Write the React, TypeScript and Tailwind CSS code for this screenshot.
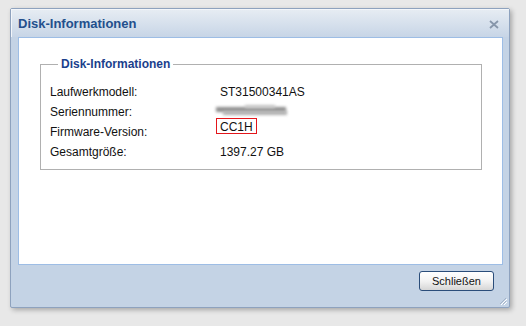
import React from "react";

const rows: { label: string; value: React.ReactNode }[] = [
  { label: "Laufwerkmodell:", value: "ST31500341AS" },
  {
    label: "Seriennummer:",
    value: (
      <span className="relative inline-block w-[74px] h-[14px] -ml-[5px] mt-[2px] align-top">
        <span className="absolute left-[1px] top-[3px] w-[70px] h-[5px] bg-[#8e8e8e] blur-[1.5px]" />
        <span className="absolute left-[8px] top-[7px] w-[64px] h-[4px] bg-[#b0b0b0] blur-[1.5px]" />
        <span className="absolute left-[30px] top-[1px] w-[30px] h-[3px] bg-[#c8c8c8] blur-[1.5px]" />
      </span>
    ),
  },
  {
    label: "Firmware-Version:",
    value: (
      <span className="inline-flex items-center h-[16px] -ml-[4px] px-[3px] border border-[#e3161b] leading-[16px] pt-[1px] -mt-[4px] align-top">
        CC1H
      </span>
    ),
  },
  { label: "Gesamtgröße:", value: "1397.27 GB" },
];

export default function App() {
  return (
    <div
      className="w-[526px] h-[326px] bg-[#e8e8e8] pt-[8px] pl-[10px] overflow-hidden"
      style={{ fontFamily: '"Liberation Sans", Arial, sans-serif' }}
    >
      <div className="relative w-[500px] h-[300px] bg-[#c4d3e5] border border-[#8ea2be] rounded-[2px] shadow-[2px_2px_5px_rgba(0,0,0,0.28)] flex flex-col">
        {/* title bar */}
        <div className="h-[28px] flex items-center justify-between pl-[6px] pr-[10px] bg-gradient-to-b from-[#e6ecf3] to-[#c7d5e6] border-t border-l border-[#f3f6fa]">
          <span className="text-[13px] font-bold text-[#234f8c] leading-[16px] mt-[1px]">
            Disk-Informationen
          </span>
          <svg width="10" height="9" viewBox="0 0 10 9" className="mt-[1px]">
            <path d="M1 1 L9 8 M9 1 L1 8" stroke="#8796aa" strokeWidth="1.8" />
          </svg>
        </div>
        {/* content panel */}
        <div className="ml-[7px] mr-[6px] h-[228px] bg-white border border-[#9dbde5] pt-[18px] pl-[21px] pr-[20px]">
          <fieldset className="border border-[#b0b0b0] pl-[9px] pb-[7px] m-0">
            <legend className="ml-[8px] px-[3px] text-[12px] font-bold text-[#1b3f8c] leading-[16px]">
              Disk-Informationen
            </legend>
            <div className="pt-[10px] text-[12px] text-[#111] leading-[20px]">
              {rows.map((r) => (
                <div key={r.label} className="flex h-[20px]">
                  <div className="w-[170px]">{r.label}</div>
                  <div>{r.value}</div>
                </div>
              ))}
            </div>
          </fieldset>
        </div>
        {/* footer */}
        <div className="flex justify-end pr-[15px] pt-[6px]">
          <button className="w-[75px] h-[20px] rounded-[3px] border border-[#2a4d7a] bg-gradient-to-b from-[#ffffff] via-[#f3f3f3] to-[#d6d6d6] text-[11px] text-[#111] leading-[18px] flex items-center justify-center">
            Schließen
          </button>
        </div>
        {/* resize grip */}
        <svg width="8" height="8" viewBox="0 0 8 8" className="absolute right-[2px] bottom-[2px]">
          <path d="M7 1 L1 7 M7 4 L4 7" stroke="#a3b3c8" strokeWidth="1" />
          <path d="M8 2 L2 8 M8 5 L5 8" stroke="#ffffff" strokeWidth="1" />
        </svg>
      </div>
    </div>
  );
}
